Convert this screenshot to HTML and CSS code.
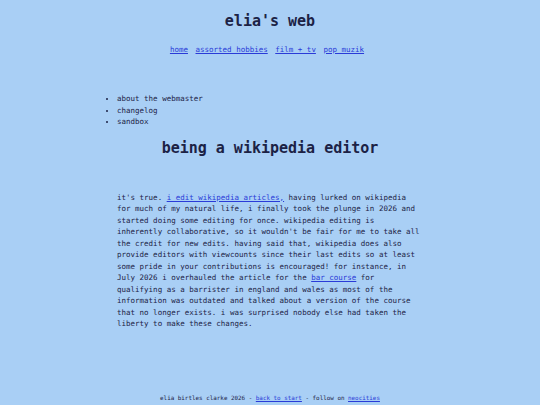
FILE: index.html
```html
<!DOCTYPE html>
<html lang="en">
<head>
<meta charset="utf-8">
<title>elia's web</title>
<link rel="stylesheet" href="styles.css">
</head>
<body>
<div class="page">
  <header class="site-header">
    <h1 class="site-title">elia's web</h1>
    <nav class="site-nav">
      <a href="#">home</a>
      <a href="#">assorted hobbies</a>
      <a href="#">film + tv</a>
      <a href="#">pop muzik</a>
    </nav>
  </header>
  <main class="content">
    <ul class="side-list">
      <li>about the webmaster</li>
      <li>changelog</li>
      <li>sandbox</li>
    </ul>
    <h2 class="post-title">being a wikipedia editor</h2>
    <p class="post-body">it's true. <a href="#">i edit wikipedia articles,</a> having lurked on wikipedia for much of my natural life, i finally took the plunge in 2026 and started doing some editing for once. wikipedia editing is inherently collaborative, so it wouldn't be fair for me to take all the credit for new edits. having said that, wikipedia does also provide editors with viewcounts since their last edits so at least some pride in your contributions is encouraged! for instance, in July 2026 i overhauled the article for the <a href="#">bar course</a> for qualifying as a barrister in england and wales as most of the information was outdated and talked about a version of the course that no longer exists. i was surprised nobody else had taken the liberty to make these changes.</p>
  </main>
  <footer class="site-footer">
    elia birtles clarke 2026 - <a href="#">back to start</a> - follow on <a href="#">neocities</a>
  </footer>
</div>
</body>
</html>
```
FILE: styles.css
```css
html, body {
  margin: 0;
  padding: 0;
  background: #a9cff5;
}
body {
  font-family: "DejaVu Sans Mono", monospace;
  color: #1c2245;
}
a {
  color: #2a3bd8;
}
.page {
  min-height: 405px;
  display: flex;
  flex-direction: column;
  align-items: center;
}
.site-header {
  text-align: center;
  padding-top: 12px;
}
.site-title {
  font-size: 15px;
  line-height: 18px;
  margin: 0;
}
.site-nav {
  font-size: 7.5px;
  line-height: 11px;
  margin-top: 14px;
  padding-right: 6px;
}
.site-nav a {
  margin: 0 1.5px;
}
.content {
  width: 306px;
  font-size: 7.5px;
  line-height: 11.5px;
}
.side-list {
  margin: 38px 0 0 0;
  padding: 0;
}
.post-title {
  text-align: center;
  font-size: 15px;
  line-height: 18px;
  margin: 11px 0 0 0;
}
.post-body {
  margin: 35px 0 0 0;
}
.site-footer {
  margin-top: auto;
  font-size: 5.9px;
  line-height: 8px;
  padding-bottom: 3px;
}
```
